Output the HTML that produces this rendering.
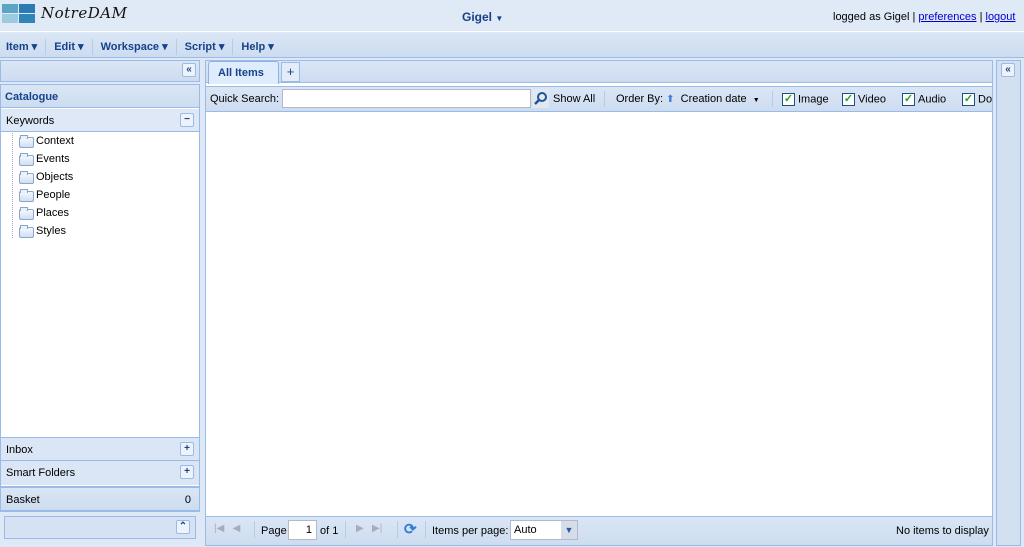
<!DOCTYPE html>
<html><head><meta charset="utf-8"><style>
*{box-sizing:border-box;margin:0;padding:0}
body{width:1024px;height:547px;background:#dfe8f6;font-family:"Liberation Sans",Arial,sans-serif;font-size:11px;color:#000;position:relative;overflow:hidden}
.a{position:absolute}
.hdr{background:linear-gradient(#dae6f5,#cddcf0);}
.btn{position:absolute;width:14px;height:14px;border:1px solid #99bbe8;background:#eef3fb;border-radius:2px;color:#15428b;font-size:10px;line-height:11px;text-align:center;font-weight:bold}
.menu span{color:#15428b;font-weight:bold;font-size:11px;margin-right:8px}
.sep{display:inline-block;width:1px;height:16px;background:#b8cbe5;vertical-align:middle;margin-right:8px}
.fold{position:absolute;left:19px;width:15px;height:11px;border:1px solid #8aa6cc;border-radius:2px;background:linear-gradient(#f4f8fd,#cfdef2)}
.fold:before{content:"";position:absolute;left:0;top:-3px;width:6px;height:3px;border:1px solid #8aa6cc;border-bottom:none;background:#e8f0fa}
.cb{display:inline-block;width:13px;height:13px;border:1px solid #1c5180;background:#fff;color:#21a121;font-size:11px;line-height:11px;text-align:center;font-weight:bold;vertical-align:middle;margin-right:3px}
a{color:#00c;text-decoration:underline}
</style></head><body>
<div class="a" style="left:0;top:0;width:1024px;height:32px;background:#e0e9f6;border-bottom:1px solid #fff"></div>
<div class="a" style="left:2px;top:4px;width:16px;height:9px;background:#5ba4c6"></div>
<div class="a" style="left:19px;top:4px;width:16px;height:9px;background:#2a7bb1"></div>
<div class="a" style="left:2px;top:14px;width:16px;height:9px;background:#9ccbe0"></div>
<div class="a" style="left:19px;top:14px;width:16px;height:9px;background:#3184b8"></div>
<div class="a" style="left:41px;top:4px;font-family:'DejaVu Serif',serif;font-style:italic;font-size:15px;color:#111;letter-spacing:0.5px">NotreDAM</div>
<div class="a" style="left:462px;top:10px;font-weight:bold;font-size:12px;color:#15428b">Gigel <span style="font-size:8px">▼</span></div>
<div class="a" style="left:833px;top:11px;font-size:11px">logged as Gigel | <a>preferences</a> | <a>logout</a></div>
<div class="a hdr menu" style="left:0;top:33px;width:1024px;height:25px;border-bottom:1px solid #99bbe8;padding:6px 0 0 6px;white-space:nowrap">
<span>Item ▾</span><i class="sep"></i><span>Edit ▾</span><i class="sep"></i><span>Workspace ▾</span><i class="sep"></i><span>Script ▾</span><i class="sep"></i><span>Help ▾</span></div>
<div class="a hdr" style="left:0;top:60px;width:200px;height:22px;border:1px solid #99bbe8"></div>
<div class="btn" style="left:182px;top:63px">«</div>
<div class="a" style="left:0;top:84px;width:200px;height:428px;border:1px solid #99bbe8;background:#fff"></div>
<div class="a hdr" style="left:1px;top:85px;width:198px;height:23px;border-bottom:1px solid #99bbe8;color:#15428b;font-weight:bold;font-size:11px;padding:6px 4px">Catalogue</div>
<div class="a" style="left:1px;top:109px;width:198px;height:23px;background:#dfe8f6;border-bottom:1px solid #99bbe8;padding:6px 5px;font-size:11px">Keywords</div>
<div class="btn" style="left:180px;top:113px">−</div>
<div class="a" style="left:12px;top:133px;height:105px;border-left:1px dotted #aaa"></div>
<div class="fold" style="top:137px"></div><div class="a" style="left:36px;top:135px">Context</div>
<div class="fold" style="top:155px"></div><div class="a" style="left:36px;top:153px">Events</div>
<div class="fold" style="top:173px"></div><div class="a" style="left:36px;top:171px">Objects</div>
<div class="fold" style="top:191px"></div><div class="a" style="left:36px;top:189px">People</div>
<div class="fold" style="top:209px"></div><div class="a" style="left:36px;top:207px">Places</div>
<div class="fold" style="top:227px"></div><div class="a" style="left:36px;top:225px">Styles</div>
<div class="a" style="left:1px;top:437px;width:198px;height:24px;background:#dae5f5;border-top:1px solid #99bbe8;border-bottom:1px solid #99bbe8;padding:6px 5px">Inbox</div>
<div class="btn" style="left:180px;top:442px">+</div>
<div class="a" style="left:1px;top:461px;width:198px;height:24px;background:#dae5f5;padding:6px 5px">Smart Folders</div>
<div class="btn" style="left:180px;top:465px">+</div>
<div class="a hdr" style="left:0;top:486px;width:200px;height:25px;border:1px solid #99bbe8;border-top:2px solid #99bbe8;padding:6px 5px">Basket<span style="float:right;margin-right:3px">0</span></div>
<div class="a" style="left:4px;top:516px;width:192px;height:23px;border:1px solid #99bbe8;background:#d6e2f3"></div>
<div class="btn" style="left:176px;top:520px">⌃</div>
<div class="a" style="left:205px;top:60px;width:788px;height:486px;border:1px solid #99bbe8;background:#fff"></div>
<div class="a hdr" style="left:206px;top:61px;width:786px;height:22px;border-bottom:1px solid #99bbe8"></div>
<div class="a" style="left:208px;top:61px;width:71px;height:23px;background:#deecfd;border:1px solid #8db2e3;border-bottom:none;border-radius:3px 3px 0 0;color:#15428b;font-weight:bold;padding:5px 9px">All Items</div>
<div class="a" style="left:281px;top:62px;width:19px;height:20px;background:#e4ecf7;border:1px solid #99bbe8;color:#15428b;text-align:center;font-size:13px;line-height:17px">+</div>
<div class="a hdr" style="left:206px;top:86px;width:786px;height:26px;border-top:1px solid #99bbe8;border-bottom:1px solid #99bbe8"></div>
<div class="a" style="left:210px;top:93px">Quick Search:</div>
<div class="a" style="left:282px;top:89px;width:249px;height:19px;border:1px solid #b5b8c8;background:#fff"></div>
<div class="a" style="left:532px;top:89px;width:17px;height:19px;background:#e3e7ee"><svg width="17" height="19"><circle cx="10" cy="8" r="4" fill="none" stroke="#1a55a0" stroke-width="2"/><line x1="7" y1="11" x2="3" y2="15" stroke="#1a55a0" stroke-width="2.5"/></svg></div>
<div class="a" style="left:553px;top:93px">Show All</div>
<div class="a" style="left:604px;top:91px;width:1px;height:16px;background:#b8cbe5"></div>
<div class="a" style="left:616px;top:93px">Order By: <span style="color:#3a7bd5;font-size:10px">⬆</span>&nbsp; Creation date &nbsp;<span style="font-size:7px">▼</span></div>
<div class="a" style="left:772px;top:91px;width:1px;height:16px;background:#b8cbe5"></div>
<div class="a" style="left:782px;top:93px;white-space:nowrap"><span class="cb">✓</span>Image</div>
<div class="a" style="left:842px;top:93px;white-space:nowrap"><span class="cb">✓</span>Video</div>
<div class="a" style="left:902px;top:93px;white-space:nowrap"><span class="cb">✓</span>Audio</div>
<div class="a" style="left:962px;top:93px;width:30px;overflow:hidden;white-space:nowrap"><span class="cb">✓</span>Do</div>
<div class="a hdr" style="left:206px;top:516px;width:786px;height:29px;border-top:1px solid #99bbe8"></div>
<div class="a" style="left:214px;top:523px;color:#aab;font-size:10px">|◀ &nbsp;&nbsp;◀</div>
<div class="a" style="left:254px;top:521px;width:1px;height:17px;background:#b8cbe5"></div>
<div class="a" style="left:261px;top:525px">Page</div>
<div class="a" style="left:288px;top:520px;width:29px;height:20px;border:1px solid #b5b8c8;background:#fff;text-align:right;padding:3px 4px">1</div>
<div class="a" style="left:320px;top:525px">of 1</div>
<div class="a" style="left:345px;top:521px;width:1px;height:17px;background:#b8cbe5"></div>
<div class="a" style="left:356px;top:523px;color:#aab;font-size:10px">▶ &nbsp;&nbsp;▶|</div>
<div class="a" style="left:397px;top:521px;width:1px;height:17px;background:#b8cbe5"></div>
<div class="a" style="left:404px;top:520px;color:#2d7dd2;font-size:15px;font-weight:bold">⟳</div>
<div class="a" style="left:425px;top:521px;width:1px;height:17px;background:#b8cbe5"></div>
<div class="a" style="left:432px;top:525px">Items per page:</div>
<div class="a" style="left:510px;top:520px;width:68px;height:20px;border:1px solid #b5b8c8;background:#fff;padding:3px 3px">Auto</div>
<div class="a" style="left:561px;top:521px;width:16px;height:18px;background:#d5dde9;color:#2a5a9a;font-size:9px;text-align:center;line-height:18px">▼</div>
<div class="a" style="left:896px;top:525px">No items to display</div>
<div class="a" style="left:996px;top:60px;width:25px;height:486px;border:1px solid #99bbe8;background:#d3e0f1"></div>
<div class="btn" style="left:1001px;top:63px">«</div>
</body></html>
